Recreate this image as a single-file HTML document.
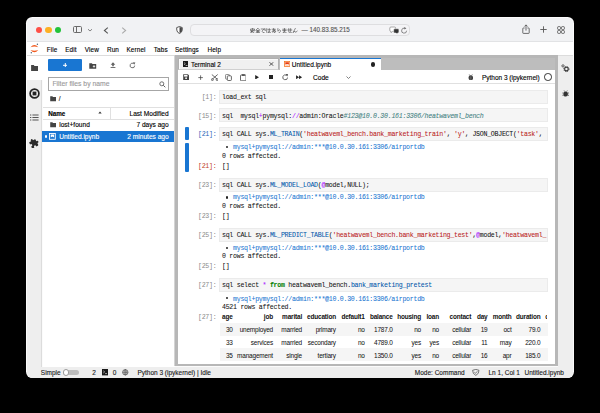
<!DOCTYPE html>
<html><head><meta charset="utf-8">
<style>
*{margin:0;padding:0;box-sizing:border-box}
html,body{width:600px;height:413px;overflow:hidden;background:#000}
body{position:relative;font-family:"Liberation Sans",sans-serif;color:#212121}
.a{position:absolute}
.t{position:absolute;white-space:nowrap;line-height:10px;-webkit-text-stroke:0.12px currentColor}
.m{font-family:"Liberation Mono",monospace}
.cd{position:absolute;white-space:pre;-webkit-text-stroke:0.05px currentColor;font-family:"Liberation Mono",monospace;font-size:6.6px;letter-spacing:-0.275px;line-height:10px;color:#111;margin-top:1.6px}
.pr{position:absolute;white-space:nowrap;font-family:"Liberation Mono",monospace;font-size:6.6px;letter-spacing:-0.275px;line-height:10px;color:#8a8a8a;width:40px;text-align:right;margin-top:1.6px}
.box{position:absolute;left:219px;width:328.5px;height:13.5px;background:#f5f5f5;border:0.6px solid #ebebeb}
.tc{position:absolute;white-space:nowrap;-webkit-text-stroke:0.03px currentColor;font-size:6.45px;letter-spacing:-0.17px;line-height:10px;color:#111;margin-top:-0.4px}
.mn{font-size:6.4px;color:#000;letter-spacing:0.1px}
.kw{color:#008000;font-weight:bold}.op{color:#aa22ff}.st{color:#ba2121}.cm{color:#408080;font-style:italic}.bl{color:#0055aa}.lk{color:#1976d2}
#win{left:26.4px;top:17.3px;width:547.2px;height:361px;border-radius:6.2px;overflow:hidden;background:#fbfbfb}
</style></head><body>
<div id="win" class="a">
</div>

<!-- ===== Title bar ===== -->
<div class="a" style="left:27px;top:18px;width:546px;height:24.3px;background:#f1f2f4;border-radius:5.5px 5.5px 0 0;border-bottom:0.7px solid #e2e3e5"></div>
<div class="a" style="left:35.9px;top:26.9px;width:6.2px;height:6.2px;border-radius:50%;background:#fe4f47"></div>
<div class="a" style="left:45.4px;top:26.9px;width:6.2px;height:6.2px;border-radius:50%;background:#fdb024"></div>
<div class="a" style="left:54.75px;top:26.9px;width:6.2px;height:6.2px;border-radius:50%;background:#22c33a"></div>
<!-- sidebar icon -->
<div class="a" style="left:73px;top:26.2px;width:9.2px;height:7.2px;border:1px solid #6b6b6b;border-radius:1.6px"></div>
<div class="a" style="left:76.2px;top:26.6px;width:0.9px;height:6.4px;background:#6b6b6b"></div>
<svg class="a" style="left:87px;top:28px" width="6" height="4" viewBox="0 0 6 4"><path d="M1 1.2 L3 3 L5 1.2" fill="none" stroke="#777" stroke-width="0.9"/></svg>
<svg class="a" style="left:103px;top:26.5px" width="6" height="7" viewBox="0 0 6 7"><path d="M4.8 0.6 L1.4 3.5 L4.8 6.4" fill="none" stroke="#555" stroke-width="1.1"/></svg>
<svg class="a" style="left:120.5px;top:26.5px" width="6" height="7" viewBox="0 0 6 7"><path d="M1.2 0.6 L4.6 3.5 L1.2 6.4" fill="none" stroke="#aaa" stroke-width="1.1"/></svg>
<!-- shield -->
<svg class="a" style="left:175.5px;top:26px" width="7" height="8" viewBox="0 0 7 8"><path d="M3.5 0.5 L6.3 1.6 L6.2 4.2 Q5.9 6.5 3.5 7.5 Q1.1 6.5 0.8 4.2 L0.7 1.6 Z" fill="#fff" stroke="#444" stroke-width="0.9"/><path d="M3.5 0.9 L3.5 7.1 Q5.7 6.2 5.9 4.2 L5.9 1.8 Z" fill="#444"/></svg>
<!-- url bar -->
<div class="a" style="left:190px;top:23.6px;width:219.5px;height:12.8px;border-radius:4px;background:#f4f4f6;border:0.6px solid #dedee0"></div>
<svg class="a" style="left:250.1px;top:28.1px" width="48" height="5.2" viewBox="0 0 48 5.2"><g transform="translate(0.00,0) scale(0.5)"><path d="M5 0.5 V2 M1 4 V2 H9 V4 M4.5 3 Q3.5 6 2 8.5 M1 5.5 H9 M2.5 6.8 Q6 8 8 9.5 M7 4 Q6 8 1.5 9.5" fill="none" stroke="#4a4a4a" stroke-width="1.25" stroke-linecap="round"/></g><g transform="translate(5.33,0) scale(0.5)"><path d="M5 0.5 L0.8 4.5 M5 0.5 L9.2 4.5 M2.5 5 H7.5 M2.5 7 H7.5 M1.5 9.3 H8.5 M5 5 V9.3" fill="none" stroke="#4a4a4a" stroke-width="1.25" stroke-linecap="round"/></g><g transform="translate(10.66,0) scale(0.5)"><path d="M1 2 H9 M7 2 Q2.5 4.5 3 7.5 Q3.5 9.5 7 9.3 M8 4 L8.6 5 M9.3 3.6 L9.8 4.6" fill="none" stroke="#4a4a4a" stroke-width="1.25" stroke-linecap="round"/></g><g transform="translate(15.99,0) scale(0.5)"><path d="M1.5 1 Q0.8 5 1.5 9 M3.5 3.5 H9 M6.5 1 V8 Q6.5 9.5 5 9.5 Q3.5 9.3 4 8 Q5 7 9 8.8" fill="none" stroke="#4a4a4a" stroke-width="1.25" stroke-linecap="round"/></g><g transform="translate(21.32,0) scale(0.5)"><path d="M1.5 2.5 H8 M4.5 0.8 Q4.2 6 6 9 M7 4 Q5 8.5 2.5 8.3 Q1 8 2 6 Q4 4 7 4.5 Q9.5 5.5 8.5 8 Q8 9 6.5 9.3" fill="none" stroke="#4a4a4a" stroke-width="1.25" stroke-linecap="round"/></g><g transform="translate(26.65,0) scale(0.5)"><path d="M2.5 1 Q1.8 5 2.8 6.5 Q4 4 6 3.5 Q8 4 7.5 7 Q7 9 4.5 9.8" fill="none" stroke="#4a4a4a" stroke-width="1.25" stroke-linecap="round"/></g><g transform="translate(31.98,0) scale(0.5)"><path d="M1.5 2.5 H8.5 M1.5 5 H8.5 M5 0.5 V7.5 Q5 9.5 3 9.3 Q1.5 9 2.5 8 Q4.5 7 8.5 9" fill="none" stroke="#4a4a4a" stroke-width="1.25" stroke-linecap="round"/></g><g transform="translate(37.31,0) scale(0.5)"><path d="M0.8 4 H9.2 M6.8 1 V6.5 Q6.8 7.5 5.8 7.3 M3 1 V8 Q3 9.5 5 9.5 H8.5" fill="none" stroke="#4a4a4a" stroke-width="1.25" stroke-linecap="round"/></g><g transform="translate(42.64,0) scale(0.5)"><path d="M5.5 0.8 Q3 5 1 9.5 Q3 5.5 4.5 6.5 Q5 9 6.5 8.5 Q8 8 9.2 6" fill="none" stroke="#4a4a4a" stroke-width="1.25" stroke-linecap="round"/></g></svg>
<div class="t" style="left:301.5px;top:25px;font-size:6.3px;color:#555">— 140.83.85.215</div>
<!-- translate + reload -->
<svg class="a" style="left:388.5px;top:25.8px" width="20" height="9" viewBox="0 0 20 9"><path d="M2 1 h3.6 q1 0 1 1 v2.4 q0 1 -1 1 h-2 l-1.6 1.3 v-1.3 q-1.2 0 -1.2 -1 v-2.4 q0 -1 1.2 -1 z" fill="#fff" stroke="#8a8a8a" stroke-width="0.7"/><path d="M5.6 2.8 h3.4 q0.9 0 0.9 0.9 v2.4 q0 0.9 -0.9 0.9 h-0.5 v1.3 l-1.5 -1.3 h-1.4 q-0.9 0 -0.9 -0.9 v-2.4 q0 -0.9 0.9 -0.9 z" fill="#333" stroke="#fff" stroke-width="0.5"/><path d="M17.6 4.7 A2.5 2.5 0 1 1 15.9 2.3" fill="none" stroke="#666" stroke-width="0.75"/><path d="M15.2 0.9 L17.4 2.2 L15.5 3.6 Z" fill="#666"/></svg>
<!-- share / plus / tabs -->
<svg class="a" style="left:521.8px;top:24.3px" width="8" height="10" viewBox="0 0 8 10"><path d="M2.6 4 H1.3 Q0.8 4 0.8 4.5 V8.9 Q0.8 9.4 1.3 9.4 H6.7 Q7.2 9.4 7.2 8.9 V4.5 Q7.2 4 6.7 4 H5.4" fill="none" stroke="#555" stroke-width="0.85"/><path d="M4 6.6 V0.9 M2.4 2.5 L4 0.9 L5.6 2.5" fill="none" stroke="#555" stroke-width="0.85"/></svg>
<svg class="a" style="left:539.5px;top:26.2px" width="7" height="7" viewBox="0 0 7 7"><path d="M3.5 0.3 V6.7 M0.3 3.5 H6.7" stroke="#555" stroke-width="0.9"/></svg>
<svg class="a" style="left:556.5px;top:26px" width="8" height="8" viewBox="0 0 8 8"><rect x="0.6" y="0.6" width="2.9" height="2.9" rx="0.9" fill="none" stroke="#555" stroke-width="0.9"/><rect x="4.5" y="0.6" width="2.9" height="2.9" rx="0.9" fill="none" stroke="#555" stroke-width="0.9"/><rect x="0.6" y="4.5" width="2.9" height="2.9" rx="0.9" fill="none" stroke="#555" stroke-width="0.9"/><rect x="4.5" y="4.5" width="2.9" height="2.9" rx="0.9" fill="none" stroke="#555" stroke-width="0.9"/></svg>

<!-- ===== Menu bar ===== -->
<div class="a" style="left:27px;top:42px;width:546px;height:14px;background:#fff;border-bottom:0.7px solid #dcdcdc"></div>
<svg class="a" style="left:30px;top:43px" width="9" height="11" viewBox="0 0 9 11"><path d="M0.5 4.3 Q4.4 -0.5 8.3 4.3 Q4.4 2.7 0.5 4.3 Z" fill="#f25a1e"/><path d="M0.5 6.9 Q4.4 11.7 8.3 6.9 Q4.4 8.5 0.5 6.9 Z" fill="#f25a1e"/><circle cx="7.4" cy="1.3" r="0.7" fill="#4f6070"/><circle cx="1.3" cy="9.8" r="0.7" fill="#4f6070"/></svg>
<div class="t mn" style="left:46.8px;top:44.6px">File</div>
<div class="t mn" style="left:65.2px;top:44.6px">Edit</div>
<div class="t mn" style="left:84.8px;top:44.6px">View</div>
<div class="t mn" style="left:107.0px;top:44.6px">Run</div>
<div class="t mn" style="left:126.5px;top:44.6px">Kernel</div>
<div class="t mn" style="left:153.8px;top:44.6px">Tabs</div>
<div class="t mn" style="left:175.0px;top:44.6px">Settings</div>
<div class="t mn" style="left:207.5px;top:44.6px">Help</div>

<!-- ===== Left activity bar ===== -->
<div class="a" style="left:27px;top:55.5px;width:15.4px;height:312px;background:#eeeeee;border-right:0.7px solid #dcdcdc"></div>
<div class="a" style="left:27px;top:55.5px;width:15.6px;height:24.5px;background:#fff"></div>
<svg class="a" style="left:30.5px;top:64.5px" width="7.8" height="6.4" viewBox="0 0 7.8 6.4"><path d="M0.1 0.1 H2.8 L3.5 0.9 H7.7 V6.3 H0.1 Z" fill="#454545"/></svg>
<svg class="a" style="left:28.7px;top:87.7px" width="11" height="11" viewBox="0 0 11 11"><circle cx="5.5" cy="5.5" r="4.4" fill="none" stroke="#222" stroke-width="1.7"/><rect x="3.6" y="3.6" width="3.8" height="3.8" fill="#222"/></svg>
<svg class="a" style="left:29.9px;top:114.4px" width="9" height="7.5" viewBox="0 0 9 7.5"><path d="M0 1 H1.3 M0 3.5 H1.3 M0 6 H1.3 M2.4 1 H8.6 M2.4 3.5 H8.6 M2.4 6 H8.6" stroke="#555" stroke-width="1"/></svg>
<svg class="a" style="left:29.3px;top:137.8px" width="10" height="10" viewBox="0 0 24 24"><g transform="rotate(-28 12 12)"><path d="M20.5 11H19V7c0-1.1-.9-2-2-2h-4V3.5C13 2.12 11.88 1 10.5 1S8 2.12 8 3.5V5H4c-1.1 0-1.99.9-1.99 2v3.8H3.5c1.49 0 2.7 1.21 2.7 2.7s-1.21 2.7-2.7 2.7H2V20c0 1.1.9 2 2 2h3.8v-1.5c0-1.490 1.21-2.7 2.7-2.7 1.49 0 2.7 1.21 2.7 2.7V22H17c1.1 0 2-.9 2-2v-4h1.5c1.38 0 2.5-1.12 2.5-2.5S21.88 11 20.5 11z" fill="#2b2b2b"/></g></svg>

<!-- ===== File browser ===== -->
<div class="a" style="left:42.6px;top:55.5px;width:132.4px;height:312px;background:#fff"></div>
<div class="a" style="left:48.1px;top:59.4px;width:33.8px;height:11.2px;background:#1976d2;border-radius:1px"></div>
<svg class="a" style="left:62.8px;top:62.8px" width="4.6" height="4.6" viewBox="0 0 4.6 4.6"><path d="M2.3 0 V4.6 M0 2.3 H4.6" stroke="#fff" stroke-width="1"/></svg>
<!-- fb toolbar icons -->
<svg class="a" style="left:89px;top:62.5px" width="7.5" height="6" viewBox="0 0 7.5 6"><path d="M0.3 0.3 H2.8 L3.5 1 H7.2 V5.7 H0.3 Z" fill="#454545"/><path d="M5 2.2 V4.6 M3.8 3.4 H6.2" stroke="#fff" stroke-width="0.8"/></svg>
<svg class="a" style="left:109.5px;top:62.3px" width="6" height="6" viewBox="0 0 6 6"><path d="M3 0.3 L5.3 2.8 H3.8 V4.3 H2.2 V2.8 H0.7 Z" fill="#616161"/><rect x="0.6" y="5" width="4.8" height="0.9" fill="#616161"/></svg>
<svg class="a" style="left:129px;top:62px" width="7" height="7" viewBox="0 0 7 7"><path d="M5.7 3.6 A2.3 2.3 0 1 1 4.7 1.6" fill="none" stroke="#616161" stroke-width="0.9"/><path d="M3.9 0.2 L6.4 0.6 L5.2 2.8 Z" fill="#616161"/></svg>
<!-- filter -->
<div class="a" style="left:48.2px;top:76.8px;width:120.6px;height:13.8px;border:0.7px solid #a6a6a6;background:#fff"></div>
<div class="t" style="left:52.4px;top:79.2px;font-size:6.8px;color:#9a9a9a">Filter files by name</div>
<svg class="a" style="left:158.8px;top:80.6px" width="7" height="7" viewBox="0 0 7 7"><circle cx="2.8" cy="2.8" r="2" fill="none" stroke="#616161" stroke-width="0.9"/><path d="M4.3 4.3 L6.3 6.3" stroke="#616161" stroke-width="1"/></svg>
<!-- breadcrumb -->
<svg class="a" style="left:49.8px;top:96.2px" width="6.5" height="5.5" viewBox="0 0 6.5 5.5"><path d="M0.2 0.2 H2.4 L3 0.9 H6.3 V5.3 H0.2 Z" fill="#454545"/></svg>
<div class="t" style="left:58.8px;top:94px;font-size:6.5px">/</div>
<!-- header -->
<div class="a" style="left:42.6px;top:107.2px;width:132.4px;height:0.6px;background:#e0e0e0"></div>
<div class="a" style="left:42.6px;top:119.3px;width:132.4px;height:0.6px;background:#e0e0e0"></div>
<div class="a" style="left:110px;top:107.5px;width:0.6px;height:12px;background:#e0e0e0"></div>
<div class="t" style="left:48.2px;top:108.5px;font-size:6.3px;font-weight:bold;color:#000">Name</div>
<svg class="a" style="left:97.5px;top:111px" width="4" height="3" viewBox="0 0 4 3"><path d="M0.3 2.6 L2 0.4 L3.7 2.6 Z" fill="#333"/></svg>
<div class="t" style="right:431.3px;top:108.5px;font-size:6.6px;color:#000">Last Modified</div>
<!-- rows -->
<svg class="a" style="left:49.8px;top:122.2px" width="6.5" height="5.5" viewBox="0 0 6.5 5.5"><path d="M0.2 0.2 H2.4 L3 0.9 H6.3 V5.3 H0.2 Z" fill="#454545"/></svg>
<div class="t" style="left:59.2px;top:120.2px;font-size:6.6px;color:#000">lost+found</div>
<div class="t" style="right:431.3px;top:120.2px;font-size:6.6px;color:#000">7 days ago</div>
<div class="a" style="left:42.4px;top:131px;width:132.6px;height:11.2px;background:#1976d2"></div>
<div class="a" style="left:44.6px;top:135.4px;width:2.5px;height:2.5px;border-radius:50%;background:#fff"></div>
<svg class="a" style="left:49.4px;top:133.2px" width="6.8" height="6.8" viewBox="0 0 6.8 6.8"><rect x="0.5" y="0.5" width="5.8" height="5.8" fill="none" stroke="#fff" stroke-width="0.9"/><path d="M1.7 1.5 H5.1 V4.4 L3.4 3.4 L1.7 4.4 Z" fill="#fff"/></svg>
<div class="t" style="left:59.2px;top:131.6px;font-size:6.6px;color:#fff">Untitled.ipynb</div>
<div class="t" style="right:431.3px;top:131.6px;font-size:6.6px;color:#fff">2 minutes ago</div>

<!-- ===== Dock panel ===== -->
<div class="a" style="left:173.8px;top:55.2px;width:1.4px;height:311.3px;background:#d4d4d4"></div>
<div class="a" style="left:175px;top:55.2px;width:383px;height:311.3px;background:#b7b7b7"></div>
<div class="a" style="left:178px;top:58.2px;width:377px;height:11.8px;background:#bdbdbd"></div>
<div class="a" style="left:178.4px;top:70px;width:376.6px;height:294px;background:#fff"></div>
<!-- tabs -->
<div class="a" style="left:177.8px;top:58.2px;width:101.7px;height:11.5px;background:#f0f0f0;border:0.6px solid #b0b0b0;border-bottom:0.7px solid #d0d0d0;box-shadow:inset 0.8px 0.8px 0 #fff"></div>
<div class="a" style="left:279.5px;top:58.1px;width:101.7px;height:12.1px;background:#fff;border-top:1.6px solid #1976d2"></div>
<div class="t" style="left:190.9px;top:59.6px;font-size:6.5px;color:#000">Terminal 2</div>
<div class="t" style="left:291.8px;top:59.6px;font-size:6.5px;color:#000">Untitled.ipynb</div>
<svg class="a" style="left:182.8px;top:61px" width="5.4" height="6" viewBox="0 0 5.4 6"><rect x="0" y="0" width="5.4" height="6" fill="#1a1a1a"/><path d="M1.1 1.6 L2.3 2.7 L1.1 3.8 M2.7 4.5 H4.5" fill="none" stroke="#fff" stroke-width="0.6"/></svg>
<svg class="a" style="left:269.1px;top:62px" width="4.8" height="4" viewBox="0 0 4.8 4"><path d="M0.3 0.2 L4.5 3.8 M4.5 0.2 L0.3 3.8" stroke="#333" stroke-width="0.75"/></svg>
<svg class="a" style="left:283.9px;top:61.1px" width="6.2" height="5.8" viewBox="0 0 6.2 5.8"><rect x="0.4" y="0.4" width="5.4" height="5" fill="#fff3ec" stroke="#f37726" stroke-width="0.8"/><path d="M1.3 1.2 H4.9 V3.6 Q3.1 2.6 1.3 3.6 Z" fill="#e8380d"/><path d="M1.5 4.4 H4.7" stroke="#f9b48e" stroke-width="0.5"/></svg>
<div class="a" style="left:370.9px;top:62.4px;width:4.2px;height:4.2px;border-radius:50%;background:#222"></div>
<!-- toolbar -->
<div class="a" style="left:178px;top:82.6px;width:377px;height:0.6px;background:#e0e0e0"></div>
<!-- toolbar icons -->
<svg class="a" style="left:183px;top:74.3px" width="6.2" height="6.2" viewBox="0 0 6.2 6.2"><path d="M0.2 0.2 H4.9 L6 1.3 V6 H0.2 Z" fill="#424242"/><rect x="1.1" y="0.9" width="3.4" height="1.7" fill="#fff"/><circle cx="3.1" cy="4.2" r="0.9" fill="#fff"/></svg>
<svg class="a" style="left:197.8px;top:74.6px" width="5.2" height="5.2" viewBox="0 0 5.2 5.2"><path d="M2.6 0.3 V4.9 M0.3 2.6 H4.9" stroke="#424242" stroke-width="0.75"/></svg>
<svg class="a" style="left:210.5px;top:74px" width="7.5" height="7" viewBox="0 0 7.5 7"><path d="M0.8 0.5 L6.2 5.2 M6.7 0.5 L1.3 5.2" stroke="#424242" stroke-width="0.8"/><circle cx="1.4" cy="5.6" r="1" fill="none" stroke="#424242" stroke-width="0.7"/><circle cx="6.1" cy="5.6" r="1" fill="none" stroke="#424242" stroke-width="0.7"/></svg>
<svg class="a" style="left:225.2px;top:74px" width="7" height="7" viewBox="0 0 7 7"><rect x="0.5" y="0.5" width="4" height="4.6" rx="0.8" fill="none" stroke="#616161" stroke-width="0.7"/><rect x="2.3" y="1.8" width="4.1" height="4.7" rx="0.8" fill="#fff" stroke="#424242" stroke-width="0.8"/></svg>
<svg class="a" style="left:239.5px;top:73.8px" width="6.6" height="7.2" viewBox="0 0 6.6 7.2"><rect x="0.5" y="1" width="5.6" height="5.8" rx="0.8" fill="none" stroke="#424242" stroke-width="0.8"/><rect x="1.8" y="0.3" width="3" height="1.5" fill="#424242"/></svg>
<svg class="a" style="left:255.4px;top:74.9px" width="4.2" height="4.6" viewBox="0 0 4.2 4.6"><path d="M0.2 0.1 L4 2.3 L0.2 4.5 Z" fill="#222"/></svg>
<div class="a" style="left:268.9px;top:75.3px;width:3.7px;height:3.7px;background:#222"></div>
<svg class="a" style="left:281.8px;top:74px" width="6.6" height="6.6" viewBox="0 0 6.6 6.6"><path d="M5.6 3.5 A2.4 2.4 0 1 1 4.5 1.3" fill="none" stroke="#424242" stroke-width="0.8"/><path d="M3.7 0 L6.2 0.3 L5.1 2.5 Z" fill="#424242"/></svg>
<svg class="a" style="left:296.4px;top:75.1px" width="6.2" height="4.4" viewBox="0 0 6.2 4.4"><path d="M0.1 0.2 L3.1 2.2 L0.1 4.2 Z M3.1 0.2 L6.1 2.2 L3.1 4.2 Z" fill="#222"/></svg>
<div class="t" style="left:313px;top:73.1px;font-size:6.6px;color:#000">Code</div>
<svg class="a" style="left:345.7px;top:76px" width="5" height="3" viewBox="0 0 5 3"><path d="M0.5 0.5 L2.5 2.5 L4.5 0.5" fill="none" stroke="#616161" stroke-width="0.8"/></svg>
<svg class="a" style="left:467.8px;top:74px" width="5.6" height="6.4" viewBox="0 0 5.6 6.4"><ellipse cx="2.8" cy="3.8" rx="2.3" ry="2.5" fill="#424242"/><path d="M1.2 0.4 L2 1.5 M4.4 0.4 L3.6 1.5" stroke="#424242" stroke-width="0.6"/><path d="M2.8 2.2 V6" stroke="#9e9e9e" stroke-width="0.4"/></svg>
<div class="t" style="left:481.9px;top:73.1px;font-size:6.5px;color:#000">Python 3 (ipykernel)</div>
<div class="a" style="left:544.2px;top:73.4px;width:7.5px;height:7.5px;border-radius:50%;border:0.7px solid #333"></div>

<!-- ===== Cells ===== -->
<div class="pr" style="left:176.4px;top:91.8px">[1]:</div>
<div class="box" style="top:90px"></div>
<div class="cd" style="left:222px;top:91.8px">load_ext sql</div>

<div class="pr" style="left:176.4px;top:110.2px">[15]:</div>
<div class="box" style="top:108.4px"></div>
<div class="cd" style="left:222px;top:110.2px">sql  mysql<span class="op">+</span>pymysql:<span class="op">//</span>admin:Oracle<span class="cm">#123@10.0.30.161:3306/heatwaveml_bench</span></div>

<div class="a" style="left:185px;top:127.2px;width:4px;height:13.3px;background:#1976d2;border-radius:1px"></div>
<div class="pr" style="left:176.4px;top:128.9px;color:#1f66b8">[21]:</div>
<div class="box" style="top:127.2px"></div>
<div class="cd" style="left:222px;top:128.9px">sql CALL sys.<span class="bl">ML_TRAIN</span>(<span class="st">'heatwaveml_bench.bank_marketing_train'</span>, <span class="st">'y'</span>, JSON_OBJECT(<span class="st">'task'</span>,</div>
<div class="a" style="left:185px;top:143px;width:4px;height:29px;background:#1976d2;border-radius:1px"></div>
<div class="cd" style="left:222px;top:141.8px">   <span class="lk">mysql+pymysql://admin:***@10.0.30.161:3306/airportdb</span></div>
<div class="cd" style="left:222px;top:150.5px">0 rows affected.</div>
<div class="pr" style="left:176.4px;top:160.3px;color:#c2431f">[21]:</div>
<div class="cd" style="left:222px;top:160.3px">[]</div>

<div class="pr" style="left:176.4px;top:179px">[23]:</div>
<div class="box" style="top:178px"></div>
<div class="cd" style="left:222px;top:179px">sql CALL sys.<span class="bl">ML_MODEL_LOAD</span>(<span class="op">@</span>model,NULL);</div>
<div class="cd" style="left:222px;top:191.5px">   <span class="lk">mysql+pymysql://admin:***@10.0.30.161:3306/airportdb</span></div>
<div class="cd" style="left:222px;top:200px">0 rows affected.</div>
<div class="pr" style="left:176.4px;top:210.9px">[23]:</div>
<div class="cd" style="left:222px;top:210.9px">[]</div>

<div class="pr" style="left:176.4px;top:229px">[25]:</div>
<div class="box" style="top:228px"></div>
<div class="cd" style="left:222px;top:229px">sql CALL sys.<span class="bl">ML_PREDICT_TABLE</span>(<span class="st">'heatwaveml_bench.bank_marketing_test'</span>,<span class="op">@</span>model,<span class="st">'heatwaveml_</span></div>
<div class="cd" style="left:222px;top:242.7px">   <span class="lk">mysql+pymysql://admin:***@10.0.30.161:3306/airportdb</span></div>
<div class="cd" style="left:222px;top:250.8px">0 rows affected.</div>
<div class="pr" style="left:176.4px;top:260.9px">[25]:</div>
<div class="cd" style="left:222px;top:260.9px">[]</div>

<div class="pr" style="left:176.4px;top:279.7px">[27]:</div>
<div class="box" style="top:278px"></div>
<div class="cd" style="left:222px;top:279.7px">sql select <span class="op">*</span> <span class="kw">from</span> heatwaveml_bench.<span class="bl">bank_marketing_pretest</span></div>
<div class="cd" style="left:222px;top:293.2px">   <span class="lk">mysql+pymysql://admin:***@10.0.30.161:3306/airportdb</span></div>
<div class="cd" style="left:222px;top:301.3px">4521 rows affected.</div>
<div class="pr" style="left:176.4px;top:311.7px">[27]:</div>

<div class="a" style="left:225.9px;top:146.2px;width:2.2px;height:2.2px;border-radius:50%;background:#222"></div>
<div class="a" style="left:225.9px;top:196.4px;width:2.2px;height:2.2px;border-radius:50%;background:#222"></div>
<div class="a" style="left:225.9px;top:246.8px;width:2.2px;height:2.2px;border-radius:50%;background:#222"></div>
<div class="a" style="left:225.9px;top:297.2px;width:2.2px;height:2.2px;border-radius:50%;background:#222"></div>
<!-- table -->
<div class="a" style="left:219.5px;top:323.1px;width:328px;height:12.5px;background:#f5f5f5"></div>
<div class="a" style="left:219.5px;top:348.4px;width:328px;height:12.5px;background:#f5f5f5"></div>
<div class="tc" style="right:367.3px;top:312px;font-weight:bold">age</div>
<div class="tc" style="right:327.0px;top:312px;font-weight:bold">job</div>
<div class="tc" style="right:298.0px;top:312px;font-weight:bold">marital</div>
<div class="tc" style="right:264.1px;top:312px;font-weight:bold">education</div>
<div class="tc" style="right:235.3px;top:312px;font-weight:bold">default1</div>
<div class="tc" style="right:207.3px;top:312px;font-weight:bold">balance</div>
<div class="tc" style="right:179.0px;top:312px;font-weight:bold">housing</div>
<div class="tc" style="right:161.0px;top:312px;font-weight:bold">loan</div>
<div class="tc" style="right:128.8px;top:312px;font-weight:bold">contact</div>
<div class="tc" style="right:112.5px;top:312px;font-weight:bold">day</div>
<div class="tc" style="right:88.5px;top:312px;font-weight:bold">month</div>
<div class="tc" style="right:59.6px;top:312px;font-weight:bold">duration</div>
<div class="tc" style="left:545.3px;top:312px;font-weight:bold;width:2px;overflow:hidden">c</div>
<div class="tc" style="right:367.3px;top:325.5px">30</div>
<div class="tc" style="right:327.0px;top:325.5px">unemployed</div>
<div class="tc" style="right:298.0px;top:325.5px">married</div>
<div class="tc" style="right:264.1px;top:325.5px">primary</div>
<div class="tc" style="right:235.3px;top:325.5px">no</div>
<div class="tc" style="right:207.3px;top:325.5px">1787.0</div>
<div class="tc" style="right:179.0px;top:325.5px">no</div>
<div class="tc" style="right:161.0px;top:325.5px">no</div>
<div class="tc" style="right:128.8px;top:325.5px">cellular</div>
<div class="tc" style="right:112.5px;top:325.5px">19</div>
<div class="tc" style="right:88.5px;top:325.5px">oct</div>
<div class="tc" style="right:59.6px;top:325.5px">79.0</div>
<div class="tc" style="right:367.3px;top:338.5px">33</div>
<div class="tc" style="right:327.0px;top:338.5px">services</div>
<div class="tc" style="right:298.0px;top:338.5px">married</div>
<div class="tc" style="right:264.1px;top:338.5px">secondary</div>
<div class="tc" style="right:235.3px;top:338.5px">no</div>
<div class="tc" style="right:207.3px;top:338.5px">4789.0</div>
<div class="tc" style="right:179.0px;top:338.5px">yes</div>
<div class="tc" style="right:161.0px;top:338.5px">yes</div>
<div class="tc" style="right:128.8px;top:338.5px">cellular</div>
<div class="tc" style="right:112.5px;top:338.5px">11</div>
<div class="tc" style="right:88.5px;top:338.5px">may</div>
<div class="tc" style="right:59.6px;top:338.5px">220.0</div>
<div class="tc" style="right:367.3px;top:351.2px">35</div>
<div class="tc" style="right:327.0px;top:351.2px">management</div>
<div class="tc" style="right:298.0px;top:351.2px">single</div>
<div class="tc" style="right:264.1px;top:351.2px">tertiary</div>
<div class="tc" style="right:235.3px;top:351.2px">no</div>
<div class="tc" style="right:207.3px;top:351.2px">1350.0</div>
<div class="tc" style="right:179.0px;top:351.2px">yes</div>
<div class="tc" style="right:161.0px;top:351.2px">no</div>
<div class="tc" style="right:128.8px;top:351.2px">cellular</div>
<div class="tc" style="right:112.5px;top:351.2px">16</div>
<div class="tc" style="right:88.5px;top:351.2px">apr</div>
<div class="tc" style="right:59.6px;top:351.2px">185.0</div>

<!-- ===== Right activity bar ===== -->
<div class="a" style="left:557.8px;top:55.5px;width:15.2px;height:312px;background:#eeeeee"></div>
<svg class="a" style="left:561.3px;top:63.6px" width="9" height="9" viewBox="0 0 9 9"><circle cx="2" cy="1.9" r="1.15" fill="none" stroke="#333" stroke-width="0.75"/><circle cx="5.4" cy="5.1" r="2.55" fill="none" stroke="#333" stroke-width="1" stroke-dasharray="1.1 0.9"/><circle cx="5.4" cy="5.1" r="1.8" fill="none" stroke="#333" stroke-width="1.1"/></svg>
<svg class="a" style="left:562.2px;top:89.6px" width="7.4" height="7" viewBox="0 0 7.4 7"><ellipse cx="3.7" cy="4" rx="2.3" ry="2.6" fill="#333"/><path d="M2.1 0.5 L2.8 1.6 M5.3 0.5 L4.6 1.6 M0.4 3 H1.6 M5.8 3 H7 M0.4 5.3 H1.6 M5.8 5.3 H7" stroke="#333" stroke-width="0.7"/></svg>

<!-- ===== Status bar ===== -->
<div class="a" style="left:27px;top:367px;width:546px;height:10.6px;background:#eeeeee;border-radius:0 0 5.5px 5.5px"></div>
<div class="t" style="left:40.8px;top:368.2px;font-size:6.5px;color:#1a1a1a">Simple</div>
<div class="a" style="left:63px;top:369.7px;width:15.7px;height:5.6px;border-radius:3px;background:#bdbdbd"></div>
<div class="a" style="left:62.8px;top:369.3px;width:6.3px;height:6.3px;border-radius:50%;background:#fff;border:0.6px solid #9a9a9a"></div>
<div class="t" style="left:92.3px;top:368.2px;font-size:6.5px;color:#1a1a1a">2</div>
<svg class="a" style="left:101.7px;top:369.2px" width="6.4" height="6.4" viewBox="0 0 6.4 6.4"><rect x="0" y="0" width="6.4" height="6.4" fill="#1a1a1a"/><path d="M1.3 1.8 L2.6 2.9 L1.3 4 M3.1 4.6 H5" fill="none" stroke="#fff" stroke-width="0.6"/></svg>
<div class="t" style="left:112.8px;top:368.2px;font-size:6.5px;color:#1a1a1a">0</div>
<svg class="a" style="left:122px;top:369px" width="6.6" height="6.6" viewBox="0 0 6.6 6.6"><circle cx="3.3" cy="3.3" r="2.7" fill="none" stroke="#424242" stroke-width="0.7"/><path d="M0.6 3.3 H6 M3.3 0.6 V6" stroke="#424242" stroke-width="0.6"/><ellipse cx="3.3" cy="3.3" rx="1.2" ry="2.7" fill="none" stroke="#424242" stroke-width="0.5"/></svg>
<div class="t" style="left:137.4px;top:368.2px;font-size:6.5px;color:#1a1a1a">Python 3 (ipykernel) | Idle</div>
<div class="t" style="left:414.8px;top:368.2px;font-size:6.5px;color:#1a1a1a">Mode: Command</div>
<svg class="a" style="left:472px;top:369px" width="7.6" height="6.8" viewBox="0 0 7.6 6.8"><path d="M3.8 0.4 L7 1.3 Q7 5 3.8 6.4 Q0.6 5 0.6 1.3 Z" fill="none" stroke="#424242" stroke-width="0.7"/><path d="M2.4 3.3 L3.5 4.3 L5.3 2.3" fill="none" stroke="#424242" stroke-width="0.7"/></svg>
<div class="t" style="left:488.5px;top:368.2px;font-size:6.5px;color:#1a1a1a">Ln 1, Col 1</div>
<div class="t" style="left:524.5px;top:368.2px;font-size:6.5px;color:#1a1a1a">Untitled.ipynb</div>

</body></html>
